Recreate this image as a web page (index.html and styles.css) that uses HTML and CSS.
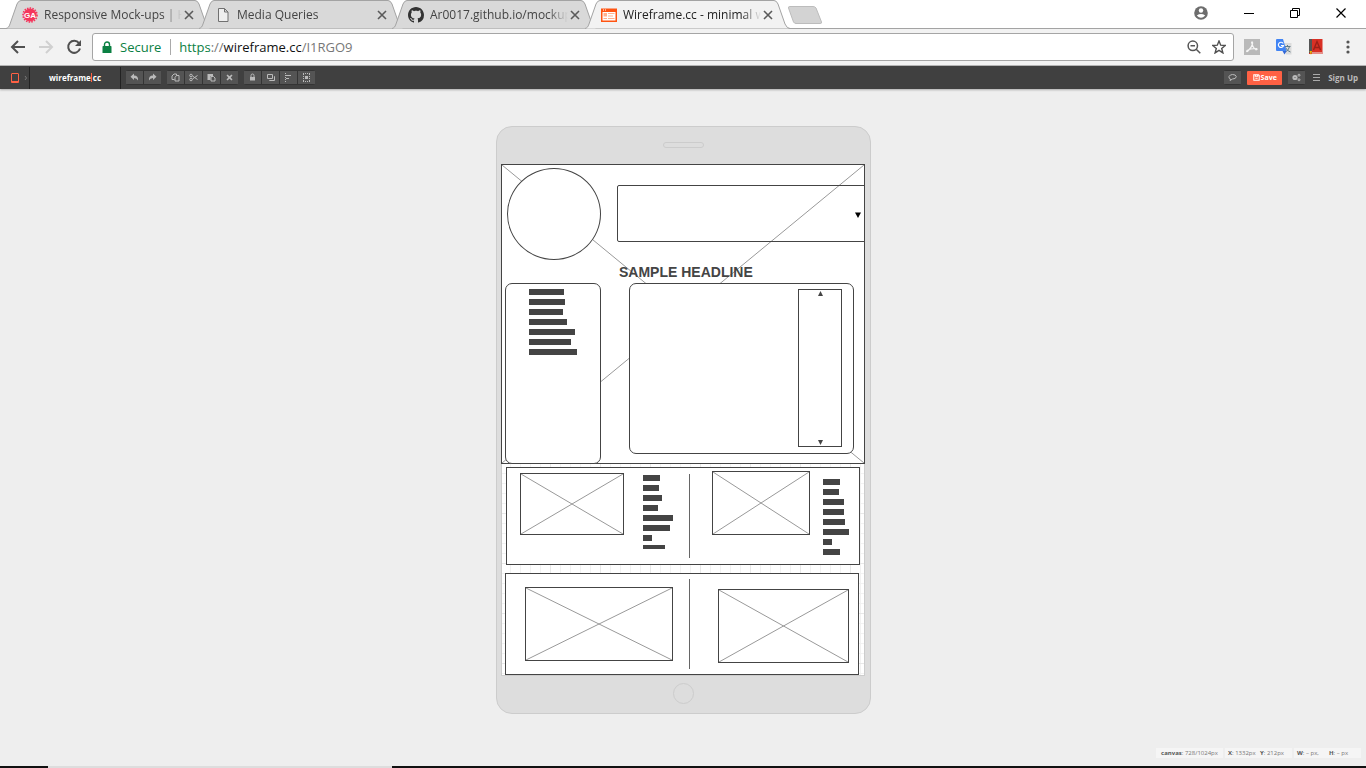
FILE: index.html
```html
<!DOCTYPE html>
<html lang="en">
<head>
<meta charset="utf-8">
<title>Wireframe.cc - minimal wireframing tool</title>
<link rel="stylesheet" href="styles.css">
</head>
<body>
<svg width="0" height="0" class="defs" aria-hidden="true">
  <symbol id="tab-shape" viewBox="0 0 205 29"><path d="M0 28.5C2 28 3 27 4 24L11 4Q12.500 .5 15 .5H189Q191.500 .5 193 4L200 24Q202 28.500 205 28.500" stroke="#a3a3a3"/></symbol>
  <symbol id="x" viewBox="0 0 10 10"><path d="M1 1L9 9M9 1L1 9" fill="none" stroke="#5a5a5a" stroke-width="1.6"/></symbol>
</svg>
<header class="browser">
  <div class="titlebar">
    <nav class="tabs" aria-label="Tabs">
      <div class="tab">
        <svg class="shape"><use href="#tab-shape"/></svg>
        <svg class="fav" viewBox="0 0 16 16"><circle cx="8" cy="8" r="6.500" fill="#f5365c"/><circle cx="8" cy="8" r="7" fill="none" stroke="#f5365c" stroke-width="1.600" stroke-dasharray="1.500 1.200"/><text x="8" y="11" text-anchor="middle" class="ga">GA</text></svg>
        <a href="#" class="tab-title">Responsive Mock-ups | H</a>
        <button class="close" aria-label="Close tab"><svg width="10" height="10"><use href="#x"/></svg></button>
      </div>
      <div class="tab">
        <svg class="shape"><use href="#tab-shape"/></svg>
        <svg class="fav" viewBox="0 0 16 16"><path d="M3.500 1.500H9.500L13 5V14.500H3.500ZM9.500 1.500V5H13" fill="#eee" stroke="#707070"/></svg>
        <a href="#" class="tab-title">Media Queries</a>
        <button class="close" aria-label="Close tab"><svg width="10" height="10"><use href="#x"/></svg></button>
      </div>
      <div class="tab">
        <svg class="shape"><use href="#tab-shape"/></svg>
        <svg class="fav" viewBox="0 0 16 16"><path fill="#333" d="M8 0C3.580 0 0 3.580 0 8c0 3.540 2.290 6.530 5.470 7.590.4.070.55-.17.55-.38 0-.19-.01-.82-.01-1.490-2.010.37-2.530-.49-2.690-.94-.09-.23-.48-.94-.82-1.130-.28-.15-.68-.52-.01-.53.63-.01 1.080.58 1.230.82.72 1.210 1.870.87 2.330.66.070-.52.28-.87.51-1.070-1.780-.2-3.640-.89-3.640-3.950 0-.87.31-1.590.82-2.150-.08-.2-.36-1.020.08-2.120 0 0 .67-.21 2.200.82.64-.18 1.320-.27 2-.27s1.360.09 2 .27c1.530-1.040 2.200-.82 2.200-.82.44 1.100.16 1.920.08 2.120.51.56.82 1.270.82 2.150 0 3.070-1.870 3.750-3.650 3.950.29.25.54.73.54 1.480 0 1.070-.01 1.930-.01 2.200 0 .21.15.46.55.38A8.010 8.010 0 0 0 16 8c0-4.420-3.580-8-8-8z"/></svg>
        <a href="#" class="tab-title">Ar0017.github.io/mockup</a>
        <button class="close" aria-label="Close tab"><svg width="10" height="10"><use href="#x"/></svg></button>
      </div>
      <div class="tab active">
        <svg class="shape"><use href="#tab-shape"/></svg>
        <svg class="fav" viewBox="0 0 16 16"><path fill="#ff5412" d="M0 1.500H16V15H0Z"/><path fill="#fff" d="M1.500 5H14.500V13.500H1.500ZM2 2.500h1v1H2zM4 2.500h1v1H4z"/><path fill="#ffb18f" d="M2.500 6H6V9.500H2.500ZM7 6h6.500v1H7zM7 8.500h5v1H7zM2.500 11H6v1H2.500zM7 11h6.500v1H7z"/></svg>
        <a href="#" class="tab-title">Wireframe.cc - minimal w</a>
        <button class="close" aria-label="Close tab"><svg width="10" height="10"><use href="#x"/></svg></button>
      </div>
      <button class="new-tab" aria-label="New tab"><svg width="36" height="19" viewBox="0 0 36 19"><path d="M1.500 2Q1 .5 3 .5H26Q28 .5 29 2L34.500 16Q35 17.500 33 17.500H9Q7.500 17.500 6.500 16Z" fill="#d3d3d3" stroke="#bcbcbc"/></svg></button>
    </nav>
    <div class="window-controls">
      <button aria-label="Profile"><svg width="14" height="14" viewBox="0 0 14 14"><circle cx="7" cy="7" r="6.800" fill="#6d6d6d"/><circle cx="7" cy="4.500" r="2.200" fill="#fff"/><path d="M2.800 9.500Q7 6.600 11.200 9.500Q7 14 2.800 9.500" fill="#fff"/></svg></button>
      <button aria-label="Minimize"><svg width="10" height="10"><path d="M0 5.500H10" stroke="#000"/></svg></button>
      <button aria-label="Restore"><svg width="10" height="10" fill="none" stroke="#000"><path d="M.5 2.500H7.500V9.500H.5ZM2.500 2.500V.5H9.500V7.500H7.500"/></svg></button>
      <button aria-label="Close window"><svg width="10" height="10"><path d="M.5 .5L9.500 9.500M9.500 .5L.5 9.500" stroke="#000" stroke-width="1.200"/></svg></button>
    </div>
  </div>
  <div class="toolbar">
    <button aria-label="Back"><svg width="16" height="14" viewBox="0 0 16 14" fill="none" stroke="#505050" stroke-width="2"><path d="M15 7H2M8 1L2 7L8 13"/></svg></button>
    <button aria-label="Forward"><svg width="16" height="14" viewBox="0 0 16 14" fill="none" stroke="#d0d0d0" stroke-width="2"><path d="M1 7H14M8 1L14 7L8 13"/></svg></button>
    <button aria-label="Reload"><svg width="16" height="16" viewBox="0 0 16 16"><path d="M13 4.200A6 6 0 1 0 14 9.500" fill="none" stroke="#505050" stroke-width="2"/><path d="M15 1V7H9Z" fill="#505050"/></svg></button>
    <div class="omnibox">
      <svg width="10" height="13" viewBox="0 0 10 13"><path d="M1 5H9Q9.500 5 9.500 6V12H.5V6Q.5 5 1 5Z" fill="#0b8043"/><path d="M2.500 5.500V3.500A2.500 2.500 0 0 1 7.500 3.500V5.500" fill="none" stroke="#0b8043" stroke-width="1.400"/></svg>
      <span class="secure">Secure</span>
      <a class="url" href="#"><span class="green">https</span><span class="dim">://</span>wireframe.cc<span class="dim">/I1RGO9</span></a>
      <button aria-label="Zoom"><svg width="14" height="14" viewBox="0 0 14 14" fill="none" stroke="#555" stroke-width="1.500"><circle cx="5.800" cy="5.800" r="4.700"/><path d="M9.200 9.200L13.300 13.300M3.500 5.800H8"/></svg></button>
      <button aria-label="Bookmark"><svg width="14" height="14" viewBox="0 0 14 14"><path d="M7 1L8.700 5.200L13.200 5.500L9.700 8.400L10.900 12.900L7 10.400L3.100 12.900L4.300 8.400L.8 5.500L5.300 5.200Z" fill="none" stroke="#505050" stroke-width="1.400"/></svg></button>
    </div>
    <div class="extensions">
      <button aria-label="PDF extension"><svg width="16" height="16"><path d="M0 0H16V16H0Z" fill="#b9b9b9"/><path d="M7.500 3Q9 2.500 8.500 5Q7.500 9 3.500 12.500Q2 13 3 11.500Q6 9.500 12.500 9.500Q14 10.500 12 10.800Q8.500 8.500 7.500 3" fill="none" stroke="#f5f5f5" stroke-width="1.200"/></svg></button>
      <button aria-label="Translate"><svg width="16" height="16"><path d="M6 4H15.500V15.500H10Z" fill="#dcdcdc"/><path d="M8.500 7.500H14.500M11.500 6V7.500M13.500 7.500Q13 11 9.500 13M9.500 8.500Q11 12 14.500 13" stroke="#607d8b" fill="none"/><path d="M0 1Q0 0 1 0H7L10.500 12H1Q0 12 0 11Z" fill="#4285f4"/><path d="M6.500 12H10.500L8.500 15.500Z" fill="#3367d6"/><path d="M7.200 4.500A2.600 2.600 0 1 0 7.500 6.500H5" fill="none" stroke="#fff" stroke-width="1.200"/></svg></button>
      <button aria-label="Dictionary"><svg width="16" height="16"><path d="M1 0H14.500V15H1Z" fill="#d93025"/><path d="M1 0H4V14H1Z" fill="#555"/><path d="M4 14H14" stroke="#eee"/><path d="M5.500 11L9 2.500L12.500 11M6.500 8.500H11.500" fill="none" stroke="#9c2018" stroke-width="1.400"/><path d="M1.500 12H4L3 16Z" fill="#f6b400"/></svg></button>
      <button aria-label="Menu"><svg width="16" height="16" fill="#555"><circle cx="8" cy="3" r="1.600"/><circle cx="8" cy="8" r="1.600"/><circle cx="8" cy="13" r="1.600"/></svg></button>
    </div>
  </div>
</header>

<div class="appbar">
  <button class="device" aria-label="Device"><svg width="16" height="10" viewBox="0 0 16 10"><path d="M.5 1Q.5 .5 1 .5H7Q7.500 .5 7.500 1V9.500H.5Z" fill="none" stroke="#ff6144"/><path d="M1 8.500H7" stroke="#ff6144"/><path d="M14 3L15.500 5L14 7" fill="none" stroke="#777"/></svg></button>
  <a class="logo" href="#">wireframe<span></span>cc</a>
  <div class="tools">
    <div class="group">
      <button aria-label="Undo"><svg viewBox="0 0 9 9"><path d="M4 .5V2.500Q8.500 2.500 8 7.500Q7 5 4 5V7L.5 3.700Z"/></svg></button>
      <button aria-label="Redo"><svg viewBox="0 0 9 9"><path d="M5 .5V2.500Q.5 2.500 1 7.500Q2 5 5 5V7L8.500 3.700Z"/></svg></button>
    </div>
    <div class="group">
      <button aria-label="Copy"><svg viewBox="0 0 9 9"><path class="line" d="M3.500 6.500H1V3L3 1H5.500V2.500M4 4.500L5.500 2.500H8V8H4Z"/></svg></button>
      <button aria-label="Cut"><svg viewBox="0 0 9 9"><path class="line" d="M3.500 3L8.500 6.500M3.500 6L8.500 2.500"/><circle class="line" cx="2" cy="2.500" r="1.300"/><circle class="line" cx="2" cy="6.500" r="1.300"/></svg></button>
      <button aria-label="Paste"><svg viewBox="0 0 9 9"><path d="M.5 1H6V3H3.500V7H.5Z"/><path class="line" d="M4 3.500H6.500L8 5V8H4Z"/></svg></button>
      <button aria-label="Delete"><svg viewBox="0 0 9 9"><path d="M2.500 1.500L4.500 3.300L6.500 1.500L7.500 2.500L5.700 4.500L7.500 6.500L6.500 7.500L4.500 5.700L2.500 7.500L1.500 6.500L3.300 4.500L1.500 2.500Z"/></svg></button>
    </div>
    <div class="group">
      <button aria-label="Lock"><svg viewBox="0 0 9 9"><path d="M2 4H7V7.500H2Z"/><path class="line" d="M3 4V2.500Q3 1 4.500 1Q6 1 6 2.500V4"/></svg></button>
      <button aria-label="Arrange"><svg viewBox="0 0 9 9"><path class="line" d="M1.500 1.500H6.500V5.500H1.500ZM8 3.500H8.500V7.500H3.500V7"/></svg></button>
      <button aria-label="Align"><svg viewBox="0 0 9 9"><path class="line dots" d="M1.500 0V9"/><path class="line" d="M2 2.500H7M2 5.500H5"/></svg></button>
      <button aria-label="Snap"><svg viewBox="0 0 9 9"><path class="line dots" d="M1 .5H8M1 8.500H8M1.500 1V9M7.500 1V9"/><path d="M3 3H6V6H3Z"/></svg></button>
    </div>
  </div>
  <div class="account">
    <div class="group"><button aria-label="Comment"><svg viewBox="0 0 9 9"><path class="line" d="M2.500 6Q.5 5.500 1 3.500Q2 1.500 4.500 1.500Q8 1.500 8.300 3.700Q8 6 4.500 6L2 7.500Z"/></svg></button></div>
    <button class="save"><svg viewBox="0 0 9 9" width="7" height="7"><path fill="none" stroke="#fff" stroke-width="1.300" d="M1 1H7L8 2V8H1ZM3 1V3H6V1M3 5.500H6"/></svg>Save</button>
    <div class="group"><button aria-label="Settings"><svg viewBox="0 0 9 9"><circle class="line gear" cx="3" cy="4.500" r="1.600"/><circle class="line" cx="7" cy="2.200" r="1"/><circle class="line" cx="7" cy="6.800" r="1"/></svg></button></div>
    <button class="burger" aria-label="Menu"><svg width="7" height="7"><path d="M0 .5H7M0 3.500H7M0 6.500H7" stroke="#aaa"/></svg></button>
    <a class="signup" href="#">Sign Up</a>
  </div>
</div>

<main class="workspace">
  <div class="phone">
    <div class="speaker"></div>
    <div class="screen">
      <div class="item picture hero"><svg><line x2="100%" y2="100%"/><line x1="100%" x2="0" y2="100%"/></svg></div>
      <div class="item avatar"></div>
      <select class="item dropdown" aria-label="Dropdown"><option></option></select>
      <svg class="item caret" width="6" height="6"><path d="M0 .5H6L3 6Z"/></svg>
      <h1 class="item headline">SAMPLE HEADLINE</h1>
      <div class="item side-panel"></div>
      <div class="item lines menu-lines"><i class="w35"></i><i class="w36"></i><i class="w34"></i><i class="w38"></i><i class="w46"></i><i class="w42"></i><i class="w48"></i></div>
      <div class="item main-panel"></div>
      <div class="item scroller">
        <svg width="5" height="5"><path d="M2.500 0L5 5H0Z" fill="#444"/></svg>
        <svg width="5" height="5"><path d="M2.500 5L5 0H0Z" fill="#444"/></svg>
      </div>

      <div class="item box upper"></div>
      <div class="item picture pic-a"><svg><line x2="100%" y2="100%"/><line x1="100%" x2="0" y2="100%"/></svg></div>
      <div class="item lines lines-a"><i class="w17"></i><i class="w16"></i><i class="w19"></i><i class="w15"></i><i class="w30"></i><i class="w27"></i><i class="w9"></i><i class="w22 cut"></i></div>
      <div class="item divider divider-a"></div>
      <div class="item picture pic-b"><svg><line x2="100%" y2="100%"/><line x1="100%" x2="0" y2="100%"/></svg></div>
      <div class="item lines lines-b"><i class="w17"></i><i class="w16"></i><i class="w21"></i><i class="w21"></i><i class="w22"></i><i class="w26"></i><i class="w9"></i><i class="w17"></i></div>

      <div class="item box lower"></div>
      <div class="item picture pic-c"><svg><line x2="100%" y2="100%"/><line x1="100%" x2="0" y2="100%"/></svg></div>
      <div class="item divider divider-b"></div>
      <div class="item picture pic-d"><svg><line x2="100%" y2="100%"/><line x1="100%" x2="0" y2="100%"/></svg></div>
    </div>
    <div class="home"></div>
  </div>
</main>

<footer class="status">
  <div class="centered"><span><b>canvas</b>: 728/1024px</span></div>
  <div><span><b>X</b>: 1332px</span><span><b>Y</b>: 212px</span></div>
  <div><span><b>W</b>: – px,</span><span><b>H</b>: – px</span></div>
</footer>
<div class="taskbar"><span></span></div>
</body>
</html>
```
FILE: styles.css
```css
* { box-sizing: border-box; }

body {
  margin: 0;
  min-height: 100vh;
  display: flex;
  flex-direction: column;
  background: #eee;
  font-family: "Open Sans", "Noto Sans", sans-serif;
}

.defs { position: absolute; }
svg { display: block; flex: none; }
a { color: inherit; text-decoration: none; }

button {
  display: flex;
  align-items: center;
  justify-content: center;
  padding: 0;
  border: 0;
  background: none;
  font-family: inherit;
}

/* Browser window */
.titlebar {
  display: flex;
  justify-content: space-between;
  height: 29px;
  background: #fff;
  border-bottom: 1px solid #a3a3a3;
}

.tabs { display: flex; padding-left: 6px; }

.tab {
  position: relative;
  display: flex;
  align-items: center;
  width: 205px;
  height: 29px;
  margin-right: -12px;
  padding: 0 17px 0 16px;
  font-size: 12px;
  line-height: 29px;
  color: #444;
}

.shape { position: absolute; inset: 0; width: 205px; height: 29px; fill: #d9d9d9; }
.active { z-index: 1; color: #222; }
.active .shape { fill: #f2f2f2; }
.fav { position: relative; width: 16px; height: 16px; }
.ga { fill: #fff; font: bold 8px "Liberation Sans Narrow", "Liberation Sans", sans-serif; }

.tab-title {
  position: relative;
  flex: 1;
  min-width: 0;
  margin-left: 6px;
  white-space: nowrap;
  -webkit-mask-image: linear-gradient(to right, #000 118px, transparent 138px);
  mask-image: linear-gradient(to right, #000 118px, transparent 138px);
}

.close { position: relative; }

.new-tab { margin: 3px 0 0 4px; padding: 3px 5px; align-items: flex-start; }

.window-controls {
  display: flex;
  align-items: center;
  gap: 36px;
  padding-right: 20px;
  height: 26px;
}

.toolbar {
  display: flex;
  align-items: center;
  gap: 12px;
  height: 37px;
  padding: 0 10px;
  background: #f2f2f2;
  border-bottom: 1px solid #b5b5b5;
}

.omnibox {
  flex: 1;
  display: flex;
  align-items: center;
  gap: 8px;
  height: 28px;
  margin: 0 -2px;
  padding: 0 7px 0 9px;
  background: #fff;
  border: 1px solid #a5a5a5;
  border-radius: 3px;
}

.omnibox button { margin-left: 3px; }

.secure {
  padding-right: 9px;
  border-right: 1px solid #aaa;
  color: #0b8043;
  font-size: 13px;
  line-height: 16px;
}

.url { flex: 1; font-size: 13px; color: #111; }
.green { color: #0b8043; }
.dim { color: #777; }

.extensions { display: flex; gap: 16px; }

/* Application bar */
.appbar {
  display: flex;
  align-items: center;
  height: 23px;
  background: #404040;
  box-shadow: 0 1px 2px #aaa;
}

.device { width: 30px; height: 22px; padding-left: 8px; border-right: 1px solid #222; }

.logo {
  display: flex;
  align-items: center;
  justify-content: center;
  width: 91px;
  height: 22px;
  border-right: 1px solid #222;
  color: #fff;
  font-size: 8px;
  font-weight: 700;
  line-height: 21px;
}

.logo span { width: 1px; height: 9px; margin: 0 1px 0 0; background: #ff6144; }
.tools { display: flex; gap: 6px; padding-left: 5px; }

.group {
  display: flex;
  gap: 1px;
  padding: 1px 0;
  background: #343434;
  border-radius: 2px;
}

.group button { width: 17px; height: 13px; background: #545454; }
.group svg { width: 9px; height: 9px; fill: #bbb; }
.group .line { fill: none; stroke: #bbb; }
.group .dots { stroke-dasharray: 1 1; }
.group .gear { stroke-width: 2; }

.account {
  display: flex;
  align-items: center;
  gap: 6px;
  margin-left: auto;
  padding-right: 8px;
}

.save {
  gap: 1px;
  width: 35px;
  height: 14px;
  border-radius: 1px;
  background: #ff6144;
  color: #fff;
  font-size: 7px;
  font-weight: 700;
}

.burger { width: 9px; height: 13px; margin-left: 1px; }
.signup { margin-left: 1px; color: #bbb; font-size: 8px; font-weight: 700; }

/* Device on the canvas */
.workspace {
  flex: 1;
  display: flex;
  justify-content: center;
  align-items: flex-start;
  padding: 37px 0 30px 1px;
}

.phone {
  display: flex;
  flex-direction: column;
  align-items: center;
  padding: 15px 5px 9px 4px;
  background: #ddd;
  border: 1px solid #ccc;
  border-radius: 16px;
}

.speaker { width: 41px; height: 6px; border: 1px solid #ccc; border-radius: 3px; }
.home { width: 21px; height: 21px; border: 1px solid #ccc; border-radius: 50%; }

.screen {
  position: relative;
  width: 364px;
  height: 512px;
  margin: 16px 0 7px;
  overflow: hidden;
  background:
    linear-gradient(to right, transparent 49px, #e8e8e8 49px) 0 0 / 50px 50px,
    linear-gradient(transparent 49px, #e8e8e8 49px) 0 0 / 50px 50px,
    linear-gradient(to right, transparent 9px, #f2f2f2 9px) 0 0 / 10px 10px,
    linear-gradient(transparent 9px, #f2f2f2 9px) 0 0 / 10px 10px,
    #fff;
  box-shadow: inset 0 0 0 1px #ccc;
}

.item { position: absolute; margin: 0; }

.picture, .box, .avatar, .side-panel, .main-panel, .scroller {
  background: #fff;
  border: 1px solid #444;
}

.picture svg { width: 100%; height: 100%; stroke: #999; }
.hero { left: 0; top: 0; width: 364px; height: 300px; }
.avatar { left: 6px; top: 4px; width: 94px; height: 92px; border-radius: 50%; }

.dropdown {
  left: 116px;
  top: 21px;
  width: 248px;
  height: 57px;
  appearance: none;
  background: none;
  border: 1px solid #444;
  border-radius: 2px 0 0 2px;
}

.caret { left: 354px; top: 48px; }

.headline {
  left: 118px;
  top: 100px;
  color: #444;
  font: bold 14px/16px "Liberation Sans", Arial, sans-serif;
  white-space: nowrap;
}

.side-panel { left: 4px; top: 119px; width: 96px; height: 181px; border-radius: 7px; }
.main-panel { left: 128px; top: 119px; width: 225px; height: 171px; border-radius: 7px; }

.scroller {
  left: 297px;
  top: 125px;
  width: 44px;
  height: 158px;
  display: flex;
  flex-direction: column;
  align-items: center;
  justify-content: space-between;
  padding: 1px 0;
}

.upper { left: 5px; top: 303px; width: 354px; height: 98px; }
.lower { left: 4px; top: 409px; width: 354px; height: 102px; }
.pic-a { left: 19px; top: 309px; width: 104px; height: 62px; }
.pic-b { left: 211px; top: 307px; width: 98px; height: 64px; }
.pic-c { left: 24px; top: 423px; width: 148px; height: 74px; }
.pic-d { left: 217px; top: 425px; width: 131px; height: 74px; }
.divider { left: 188px; width: 1px; background: #666; }
.divider-a { top: 310px; height: 84px; }
.divider-b { top: 415px; height: 90px; }

.lines { display: flex; flex-direction: column; gap: 4px; }
.lines i { height: 6px; background: #444; }
.lines .cut { height: 4px; }
.menu-lines { left: 28px; top: 125px; }
.lines-a { left: 142px; top: 311px; }
.lines-b { left: 322px; top: 315px; }

.w9 { width: 9px; }
.w15 { width: 15px; }
.w16 { width: 16px; }
.w17 { width: 17px; }
.w19 { width: 19px; }
.w21 { width: 21px; }
.w22 { width: 22px; }
.w26 { width: 26px; }
.w27 { width: 27px; }
.w30 { width: 30px; }
.w34 { width: 34px; }
.w35 { width: 35px; }
.w36 { width: 36px; }
.w38 { width: 38px; }
.w42 { width: 42px; }
.w46 { width: 46px; }
.w48 { width: 48px; }

/* Status and task bars */
.status {
  display: flex;
  justify-content: flex-end;
  gap: 2px;
  padding: 0 5px 8px 0;
  color: #777;
  font-size: 6px;
  line-height: 10px;
}

.status div {
  display: flex;
  width: 67px;
  padding-left: 3px;
  background: #f5f5f5;
}

.status span { min-width: 32px; }
.status .centered { justify-content: center; padding-left: 0; }
.status b { color: #555; }
.taskbar { height: 2px; padding-left: 48px; background: #111; }
.taskbar span { display: block; width: 344px; height: 2px; background: #ddd; }
```
